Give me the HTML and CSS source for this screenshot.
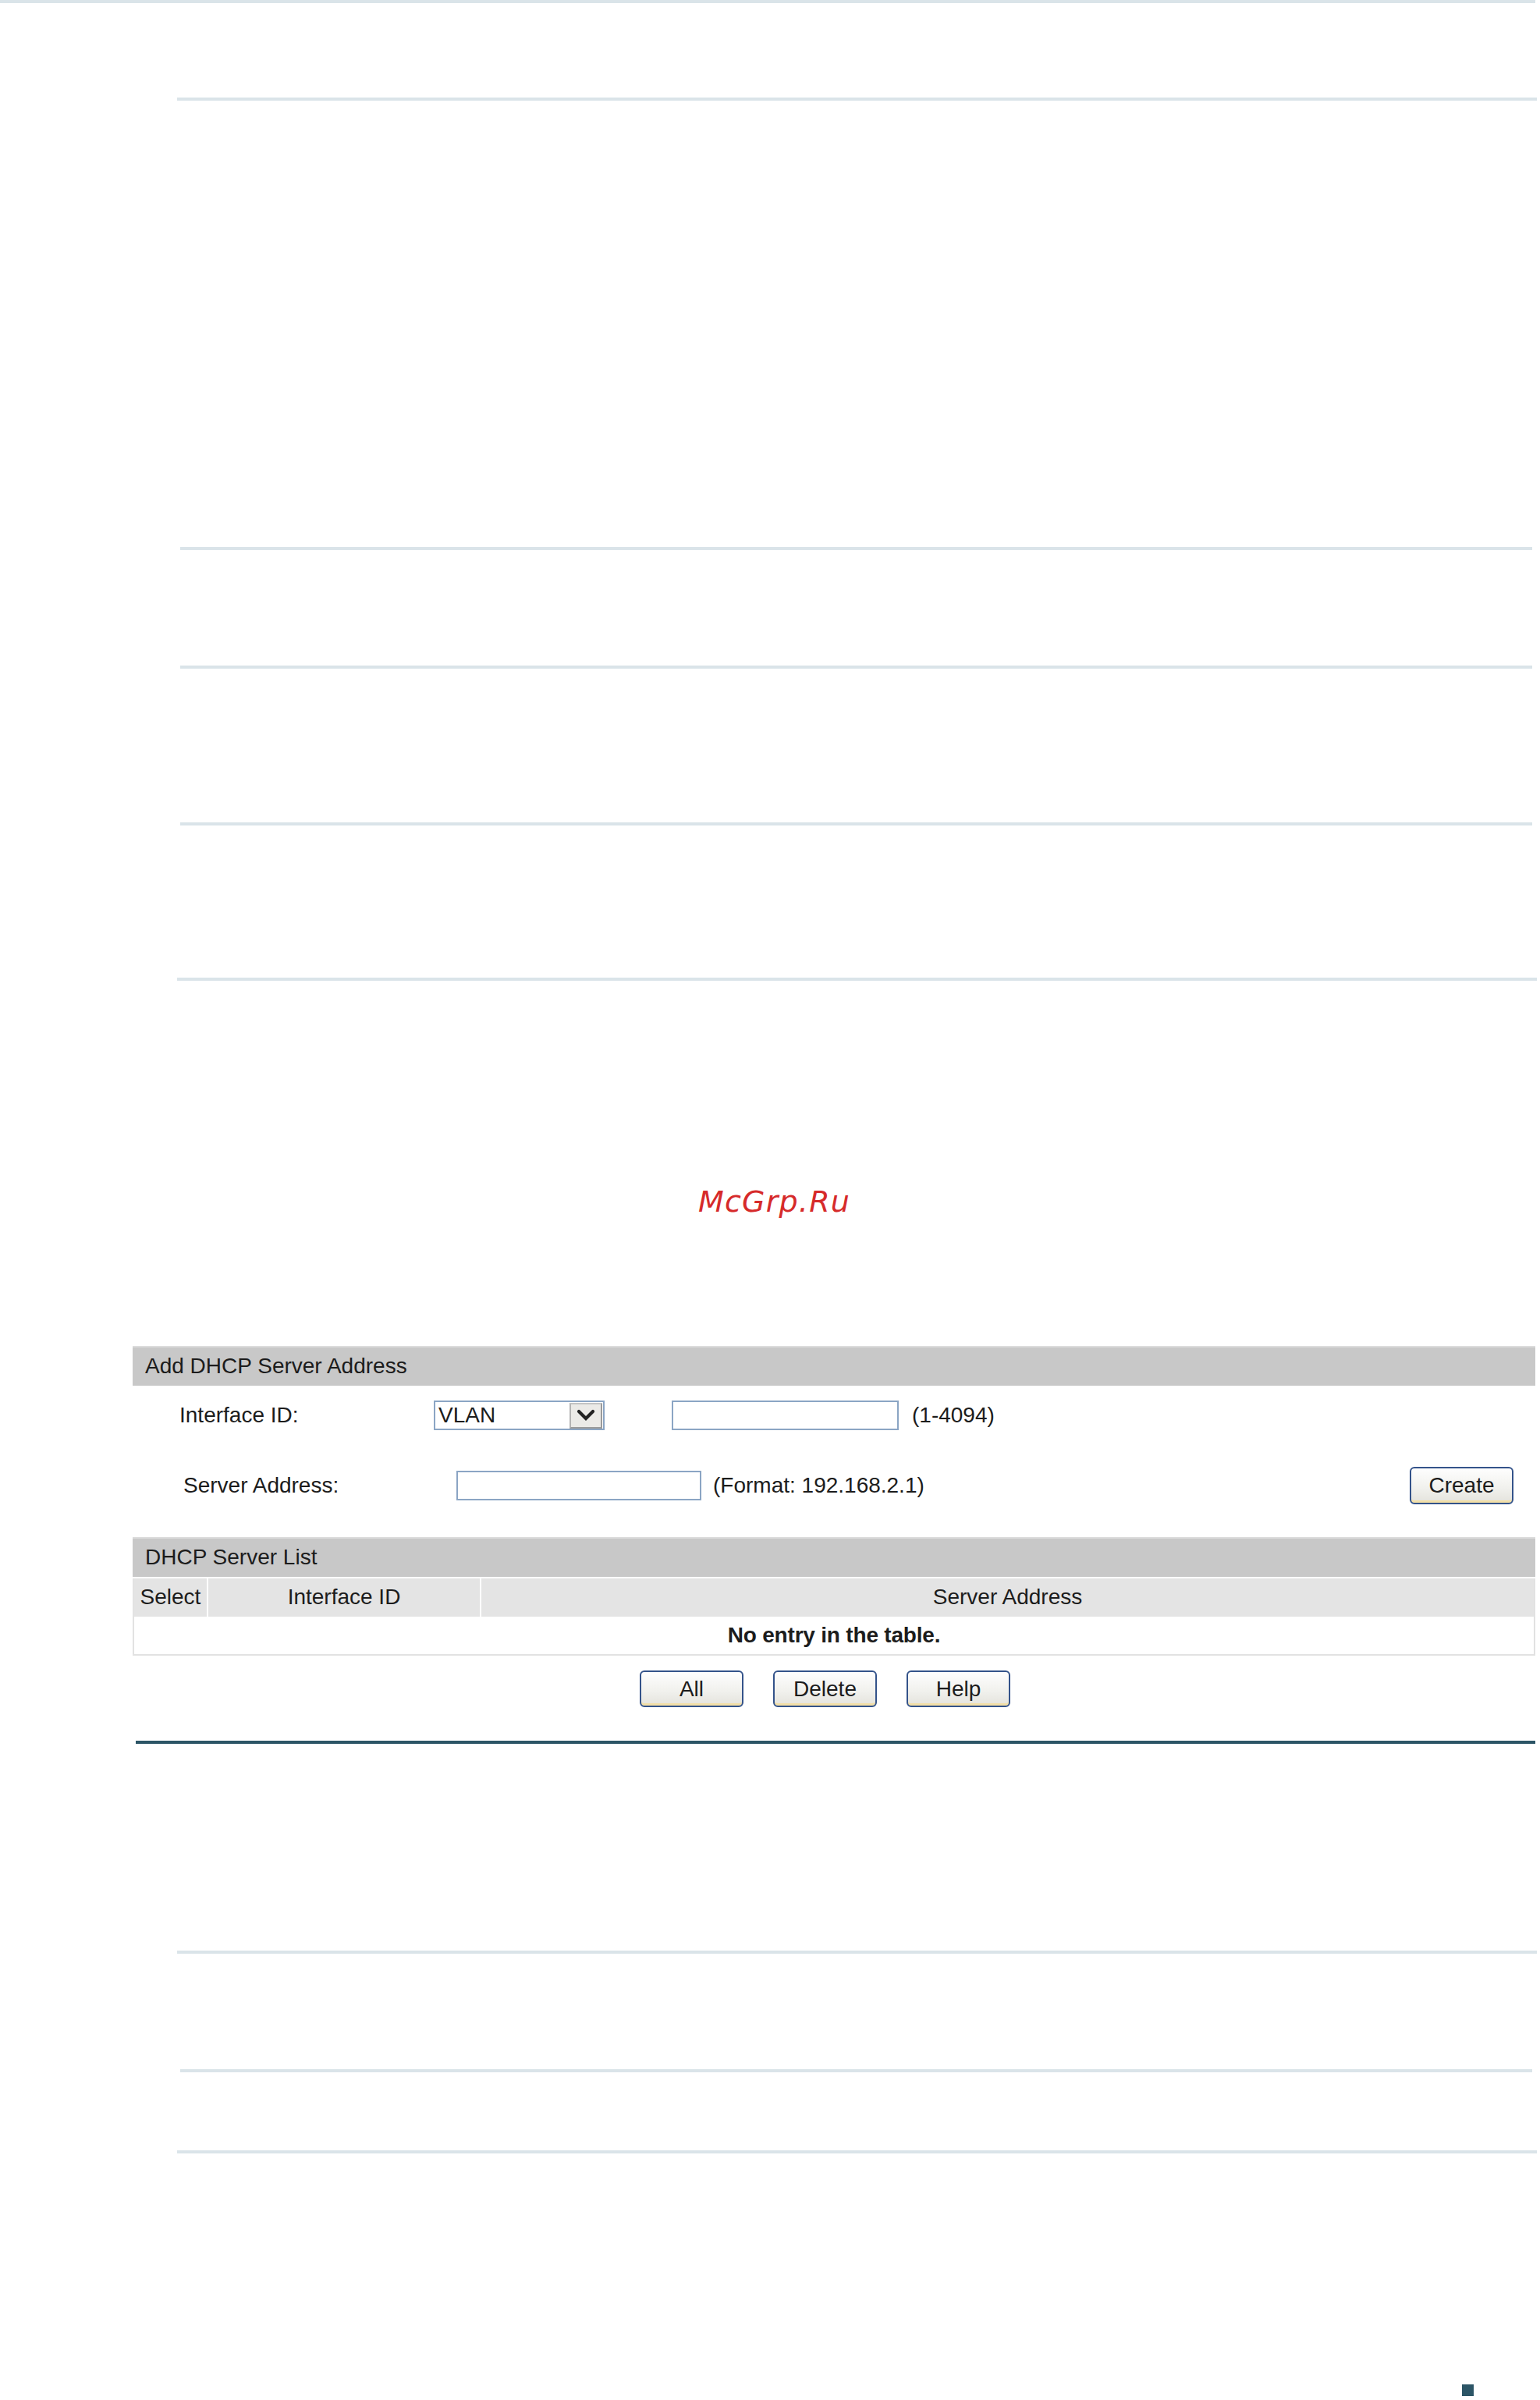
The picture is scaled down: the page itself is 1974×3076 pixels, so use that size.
FILE: index.html
```html
<!DOCTYPE html>
<html lang="en">

<head>
    <meta charset="UTF-8">
    <meta name="viewport" content="width=device-width, initial-scale=1.0">
    <title>DHCP Relay - Server Address</title>
    <link rel="stylesheet" href="styles.css">
</head>

<body>

    <div class="rule rule-top"></div>
    <div class="rule rule-wide gap-121"></div>
    <div class="rule rule-narrow gap-572"></div>
    <div class="rule rule-narrow gap-148"></div>
    <div class="rule rule-narrow gap-197"></div>
    <div class="rule rule-wide gap-195"></div>

    <div class="watermark">McGrp.Ru</div>

    <div class="panel">
        <div class="panel-title">Add DHCP Server Address</div>

        <div class="form-row row-interface">
            <label class="label label-interface" for="vlan-id">Interface ID:</label>
            <div class="select">
                <span class="select-value">VLAN</span>
                <span class="select-arrow">
                    <svg width="38" height="29" viewBox="0 0 38 29">
                        <polyline points="10,9 19,18 28,9" fill="none" stroke="#222" stroke-width="4.2" stroke-linecap="round" stroke-linejoin="miter" />
                    </svg>
                </span>
            </div>
            <input type="text" id="vlan-id" class="field field-vlan" />
            <span class="hint">(1-4094)</span>
        </div>

        <div class="form-row row-server">
            <label class="label label-server" for="server-ip">Server Address:</label>
            <input type="text" id="server-ip" class="field field-server" />
            <span class="hint hint-format">(Format: 192.168.2.1)</span>
            <button type="button" class="btn btn-create">Create</button>
        </div>

        <div class="list">
            <div class="panel-title">DHCP Server List</div>
            <div class="list-cols">
                <div class="col">Select</div>
                <div class="col">Interface ID</div>
                <div class="col">Server Address</div>
            </div>
            <div class="list-empty">No entry in the table.</div>
        </div>

        <div class="actions">
            <button type="button" class="btn">All</button>
            <button type="button" class="btn">Delete</button>
            <button type="button" class="btn">Help</button>
        </div>

        <div class="panel-end"></div>
    </div>

    <div class="rule rule-wide gap-265"></div>
    <div class="rule rule-narrow gap-148"></div>
    <div class="rule rule-wide gap-100"></div>

    <div class="page-mark"></div>

</body>

</html>
```

FILE: styles.css
```css
body {
    margin: 0;
    width: 1974px;
    font-family: "Liberation Sans", Arial, sans-serif;
    font-size: 28px;
    color: #1c1c1c;
    background-color: #fff;
}

/* light separators of the document page */
.rule {
    height: 4px;
    background-color: #dae4e9;
}

.rule-top {
    width: 1968px;
}

.rule-wide {
    margin-left: 227px;
    width: 1743px;
}

.rule-narrow {
    margin-left: 231px;
    width: 1733px;
}

.gap-100 { margin-top: 100px; }
.gap-121 { margin-top: 121px; }
.gap-148 { margin-top: 148px; }
.gap-195 { margin-top: 195px; }
.gap-197 { margin-top: 197px; }
.gap-265 { margin-top: 265px; }
.gap-572 { margin-top: 572px; }

.watermark {
    margin-top: 261px;
    height: 44px;
    line-height: 44px;
    padding-left: 895px;
    font-family: "DejaVu Sans", Verdana, sans-serif;
    font-style: oblique;
    font-size: 38px;
    letter-spacing: 1.2px;
    color: #d62a2a;
}

/* the web UI screenshot */
.panel {
    margin-top: 163px;
    margin-left: 170px;
    width: 1798px;
}

.panel-title {
    height: 51px;
    line-height: 47px;
    padding-left: 16px;
    background-color: #c8c8c8;
    border-top: 2px solid #dcdcdc;
    box-sizing: border-box;
}

.form-row {
    display: flex;
    align-items: center;
}

.row-interface {
    margin-top: 19px;
    height: 38px;
    padding-left: 60px;
}

.row-server {
    margin-top: 47px;
    height: 48px;
    padding-left: 65px;
    padding-right: 28px;
}

.label {
    display: block;
}

.label-interface {
    width: 326px;
}

.label-server {
    width: 350px;
}

.select {
    display: flex;
    align-items: center;
    width: 219px;
    height: 38px;
    box-sizing: border-box;
    border: 2px solid #8ba5c4;
    padding: 1px 1px 1px 4px;
}

.select-value {
    flex: 1;
}

.select-arrow {
    display: flex;
    align-items: center;
    justify-content: center;
    width: 42px;
    height: 33px;
    box-sizing: border-box;
    border: 2px solid #9a9a9a;
    border-top-color: #c4c4c4;
    border-left-color: #b4b4b4;
    background-color: #ebeae7;
}

.field {
    height: 38px;
    box-sizing: border-box;
    border: 2px solid #8ba5c4;
    padding: 0 6px;
    font: inherit;
    background-color: #fff;
}

.field-vlan {
    width: 291px;
    margin-left: 86px;
}

.field-server {
    width: 314px;
}

.hint {
    margin-left: 17px;
}

.hint-format {
    margin-left: 15px;
}

.btn {
    width: 133px;
    height: 47px;
    box-sizing: border-box;
    padding: 0;
    border: 2px solid #34538a;
    border-radius: 6px;
    background: linear-gradient(#fefefe, #f0f0ec 60%, #e4e3dc);
    box-shadow: inset 0 -5px 0 -2px #f2dfa8;
    font: inherit;
    color: #1c1c1c;
    cursor: pointer;
    text-align: center;
}

.btn-create {
    margin-left: auto;
    height: 48px;
}

.list {
    margin-top: 42px;
}

.list-cols {
    display: grid;
    grid-template-columns: 93px 348px 1fr;
    column-gap: 2px;
    margin-top: 2px;
    height: 49px;
    line-height: 47px;
    border-left: 2px solid #e2e2e2;
    border-right: 2px solid #e2e2e2;
    box-sizing: border-box;
    background-color: #fff;
}

.col {
    background-color: #e4e4e4;
    text-align: center;
}

.list-empty {
    height: 50px;
    line-height: 48px;
    box-sizing: border-box;
    border: 2px solid #e2e2e2;
    border-top: none;
    text-align: center;
    font-weight: bold;
    letter-spacing: -0.2px;
}

.actions {
    display: flex;
    gap: 38px;
    margin-top: 19px;
    padding-left: 650px;
}

.panel-end {
    margin-top: 43px;
    margin-left: 4px;
    height: 4px;
    background-color: #2c5566;
}

.page-mark {
    margin-top: 296px;
    margin-left: 1874px;
    width: 15px;
    height: 15px;
    background-color: #2c5566;
}
```
